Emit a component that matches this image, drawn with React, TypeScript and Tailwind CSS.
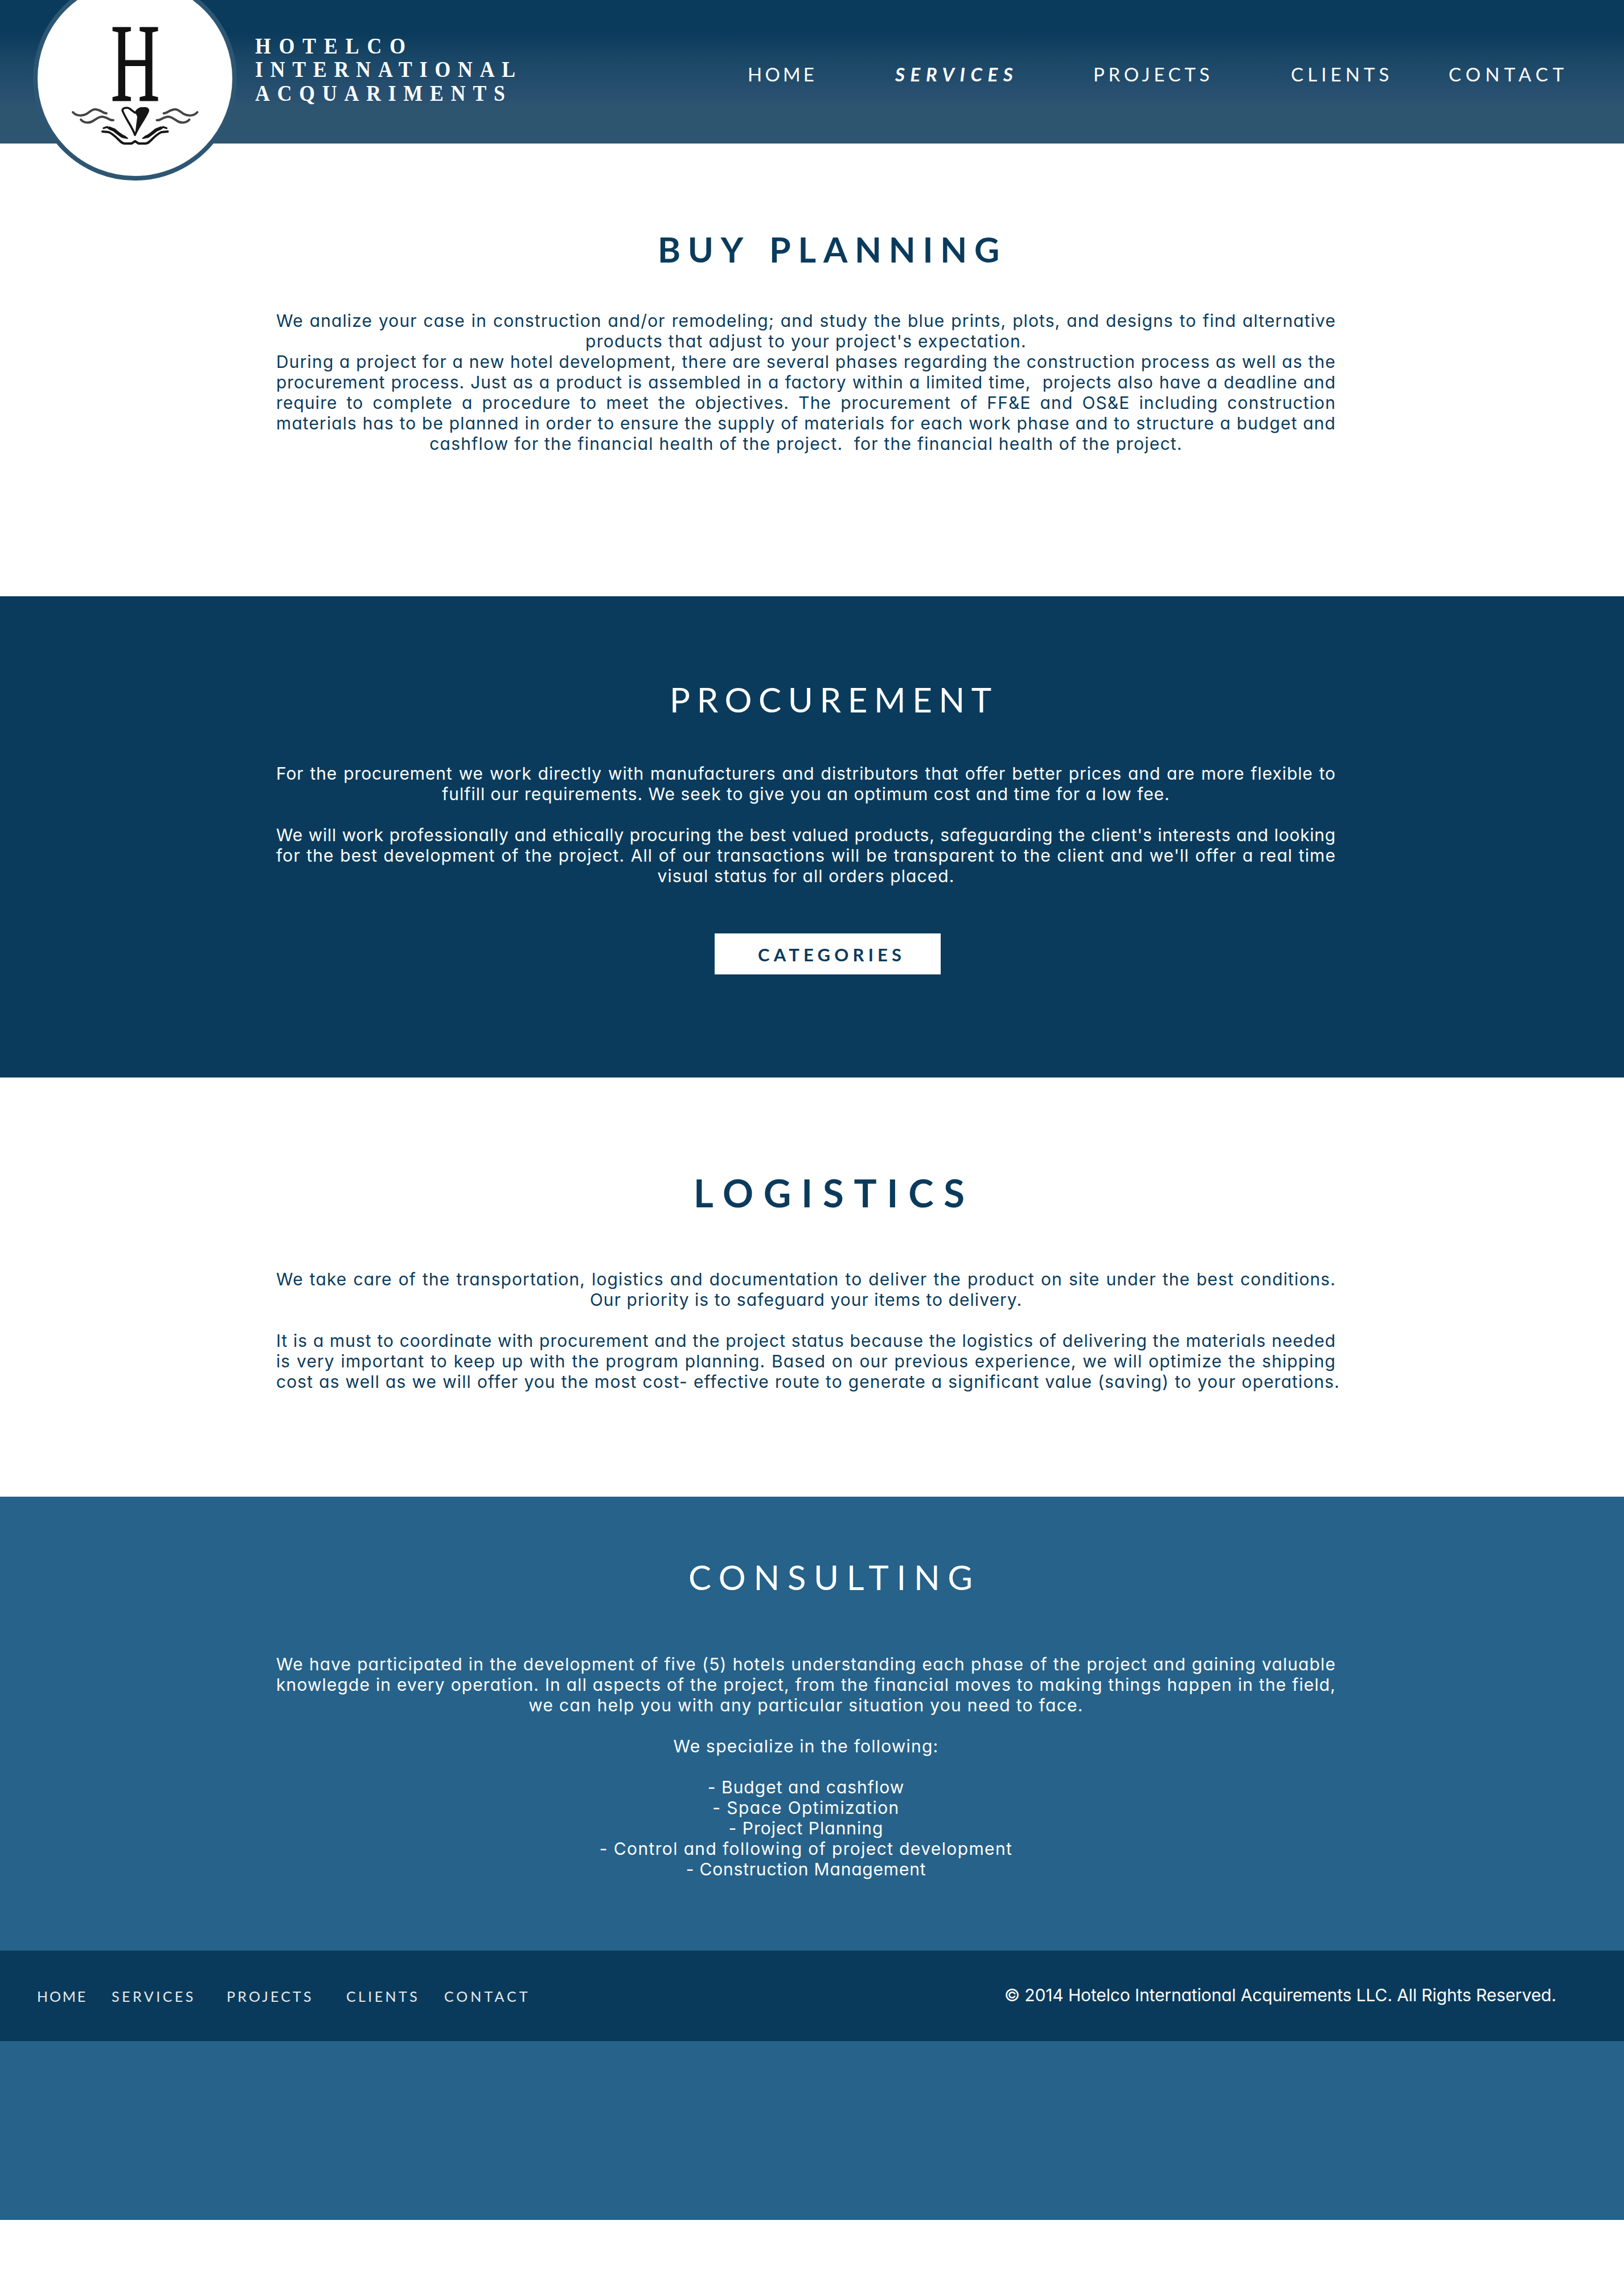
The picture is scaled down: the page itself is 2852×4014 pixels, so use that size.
const INTER = "font-['Inter',sans-serif] [font-feature-settings:'cv11']";

type TextLine = { text: string; tracking: string; justify?: boolean; wide?: boolean };

const NAV = [
  { label: "HOME", cls: "w-[259px] tracking-[5.2px]" },
  { label: "SERVICES", cls: "w-[348px] tracking-[9.6px] font-bold italic" },
  { label: "PROJECTS", cls: "w-[347px] tracking-[6.7px]" },
  { label: "CLIENTS", cls: "w-[277px] tracking-[7.1px]" },
  { label: "CONTACT", cls: "w-[220px] tracking-[8.1px]" },
];

const FOOTER_NAV = [
  { label: "HOME", cls: "w-[131px] tracking-[2.8px]" },
  { label: "SERVICES", cls: "w-[202px] tracking-[4.5px]" },
  { label: "PROJECTS", cls: "w-[210px] tracking-[4.2px]" },
  { label: "CLIENTS", cls: "w-[172px] tracking-[4.4px]" },
  { label: "CONTACT", cls: "w-[160px] tracking-[5px]" },
];

const J = "tracking-[1.1px]";

const BUY_PLANNING: TextLine[] = [
  { text: "We analize your case in construction and/or remodeling; and study the blue prints, plots, and designs to find alternative", tracking: J, justify: true },
  { text: "products that adjust to your project's expectation.", tracking: "tracking-[1.28px]" },
  { text: "During a project for a new hotel development, there are several phases regarding the construction process as well as the", tracking: "tracking-[1.15px]", justify: true },
  { text: "procurement process. Just as a product is assembled in a factory within a limited time, \u00a0projects also have a deadline and", tracking: "tracking-[0.9px]", justify: true },
  { text: "require to complete a procedure to meet the objectives. The procurement of FF&E and OS&E including construction", tracking: "tracking-[1.1px]", justify: true },
  { text: "materials has to be planned in order to ensure the supply of materials for each work phase and to structure a budget and", tracking: J, justify: true },
  { text: "cashflow for the financial health of the project. \u00a0for the financial health of the project.", tracking: "tracking-[1.23px]" },
];

const PROCUREMENT: TextLine[] = [
  { text: "For the procurement we work directly with manufacturers and distributors that offer better prices and are more flexible to", tracking: "tracking-[0.9px]", justify: true },
  { text: "fulfill our requirements. We seek to give you an optimum cost and time for a low fee.", tracking: "tracking-[0.98px]" },
  { text: "", tracking: J },
  { text: "We will work professionally and ethically procuring the best valued products, safeguarding the client's interests and looking", tracking: "tracking-[0.75px]", justify: true },
  { text: "for the best development of the project. All of our transactions will be transparent to the client and we'll offer a real time", tracking: J, justify: true },
  { text: "visual status for all orders placed.", tracking: "tracking-[1.1px]" },
];

const LOGISTICS: TextLine[] = [
  { text: "We take care of the transportation, logistics and documentation to deliver the product on site under the best conditions.", tracking: J, justify: true },
  { text: "Our priority is to safeguard your items to delivery.", tracking: "tracking-[1.05px]" },
  { text: "", tracking: J },
  { text: "It is a must to coordinate with procurement and the project status because the logistics of delivering the materials needed", tracking: "tracking-[0.98px]", justify: true },
  { text: "is very important to keep up with the program planning. Based on our previous experience, we will optimize the shipping", tracking: J, justify: true },
  { text: "cost as well as we will offer you the most cost- effective route to generate a significant value (saving) to your operations.", tracking: J, justify: true, wide: true },
];

const CONSULTING: TextLine[] = [
  { text: "We have participated in the development of five (5) hotels understanding each phase of the project and gaining valuable", tracking: J, justify: true },
  { text: "knowlegde in every operation. In all aspects of the project, from the financial moves to making things happen in the field,", tracking: J, justify: true },
  { text: "we can help you with any particular situation you need to face.", tracking: "tracking-[1.28px]" },
  { text: "", tracking: J },
  { text: "We specialize in the following:", tracking: "tracking-[1.2px]" },
  { text: "", tracking: J },
  { text: "- Budget and cashflow", tracking: "tracking-[1px]" },
  { text: "- Space Optimization", tracking: "tracking-[1.4px]" },
  { text: "- Project Planning", tracking: "tracking-[1px]" },
  { text: "- Control and following of project development", tracking: "tracking-[1.37px]" },
  { text: "- Construction Management", tracking: "tracking-[0.8px]" },
];

function Copy({ lines }: { lines: TextLine[] }) {
  return (
    <div className={`ml-[485px] w-[1861px] text-[30px] leading-[36px] font-normal ${INTER}`}>
      {lines.map((line, i) => (
        <p
          key={i}
          className={`h-[36px] whitespace-nowrap ${line.tracking} ${line.wide ? "w-[1868px]" : ""} ${
            line.justify ? "text-justify [text-align-last:justify]" : "text-center"
          }`}
        >
          {line.text}
        </p>
      ))}
    </div>
  );
}

/** Crest: condensed serif H over waves, a heart-shaped nib and cupped hands. */
function Crest() {
  return (
    <svg className="absolute left-0 top-0" width="358" height="317" viewBox="58 0 358 317" fill="none" aria-hidden="true">
      <text
        transform="translate(237.5 177) scale(0.605 1)"
        textAnchor="middle"
        fontFamily="Liberation Serif, serif"
        fontSize="196"
        fill="#111"
        stroke="#111"
        strokeWidth="2"
      >
        H
      </text>
      <Waves />
      <Hand />
      <path
        d="M237 237 C232 222 220 208 215 194 C215 189 224 188 228 191 C232 194 235 197 238 198 C240 193 246 189 251 190 C257 189 261 191 260 195 C255 208 243 222 237 237 Z"
        stroke="#161616"
        strokeWidth="3.6"
        strokeLinejoin="round"
      />
      <path d="M238 198 C240 193 246 189 251 190 C257 189 261 191 260 195 C255 208 243 222 237 237 L241 205 Z" fill="#161616" />
      <g transform="matrix(-1 0 0 1 474.5 0)">
        <Waves />
        <Hand />
      </g>
    </svg>
  );
}

function Waves() {
  return (
    <g stroke="#444" strokeWidth="4" strokeLinecap="round" strokeLinejoin="round">
      <path d="M128 197 C134 204 145 204 152 200 C160 195 163 190 172 193 C178 194 181 199 187 199" />
      <path d="M142 210 C147 216 157 217 164 212 C172 207 177 203 184 206 C190 207 193 212 199 211" />
    </g>
  );
}

function Hand() {
  return (
    <g stroke="#161616" strokeLinecap="round" strokeLinejoin="round">
      <path d="M182 225 L188 223 L194 227 L199 229" strokeWidth="3.4" />
      <path d="M192 223 L202 227 C208 232 213 237 219 239 L224 243 L214 241 C208 237 203 233 197 228 Z" fill="#161616" strokeWidth="2" />
      <path d="M180 231 L191 232 C198 235 203 240 208 245 C212 249 215 252 219 252 L231 252 L237.3 248" strokeWidth="4" />
    </g>
  );
}

export default function App() {
  return (
    <div className="min-h-[4014px] w-[2852px] bg-white font-['Lato',sans-serif] text-[#0a3b5c]">
      <header className="relative flex h-[252px] bg-[linear-gradient(to_bottom,#0b3b5c_0px,#0b3b5c_58px,#1c4868_110px,#2b5171_176px,#2e5570_186px,#2e5570_252px)] text-white">
        <div className="absolute left-[58px] top-[-41px] z-10 size-[358px] rounded-full border-8 border-[#2d5673] bg-white" />
        <div className="absolute left-[58px] top-0 z-20 h-[317px] w-[358px]">
          <Crest />
        </div>
        <div className="ml-[448px] w-[865px] pt-[60px]">
          <div className="w-[600px] origin-left scale-x-[0.87] font-['Liberation_Serif',serif] text-[41px] leading-[41.3px] font-bold">
            <p className="tracking-[16px]">HOTELCO</p>
            <p className="tracking-[14.8px]">INTERNATIONAL</p>
            <p className="tracking-[14.8px]">ACQUARIMENTS</p>
          </div>
        </div>
        <nav className="flex pt-[114px] text-[33px] leading-none">
          {NAV.map((item) => (
            <a key={item.label} className={item.cls}>
              {item.label}
            </a>
          ))}
        </nav>
      </header>

      <section className="h-[795px] pt-[155px]">
        <h2 className="mb-[77px] pl-[1155px] text-[61px] leading-none font-bold tracking-[12.7px] [word-spacing:8px]">BUY PLANNING</h2>
        <Copy lines={BUY_PLANNING} />
      </section>

      <section className="h-[845px] bg-[#0a3b5c] pt-[151px] text-white">
        <h2 className="mb-[82px] pl-[1176px] text-[60px] leading-none font-normal tracking-[11.6px]">PROCUREMENT</h2>
        <Copy lines={PROCUREMENT} />
        <button className="mt-[83px] ml-[1255px] flex h-[72px] w-[397px] bg-white pt-[22px] pl-[76px] text-[31px] leading-none font-bold tracking-[7.2px] text-[#0a3b5c]">
          CATEGORIES
        </button>
      </section>

      <section className="h-[736px] pt-[169px]">
        <h2 className="mb-[100px] pl-[1218px] text-[67px] leading-none font-bold tracking-[17.8px]">LOGISTICS</h2>
        <Copy lines={LOGISTICS} />
      </section>

      <section className="h-[797px] bg-[#26628a] pt-[111px] text-white">
        <h2 className="mb-[105px] pl-[1209px] text-[60px] leading-none font-normal tracking-[13.6px]">CONSULTING</h2>
        <Copy lines={CONSULTING} />
      </section>

      <footer className="h-[473px] bg-[#26628a] text-white">
        <div className="flex h-[159px] justify-between bg-[#0a3a5b] pr-[119px] pl-[65px]">
          <nav className="flex pt-[68px] text-[25px] leading-none text-white/90">
            {FOOTER_NAV.map((item) => (
              <a key={item.label} className={item.cls}>
                {item.label}
              </a>
            ))}
          </nav>
          <p className={`pt-[60px] text-[30px] leading-[36px] font-normal tracking-[-0.13px] ${INTER}`}>
            © 2014 Hotelco International Acquirements LLC. All Rights Reserved.
          </p>
        </div>
      </footer>
    </div>
  );
}
